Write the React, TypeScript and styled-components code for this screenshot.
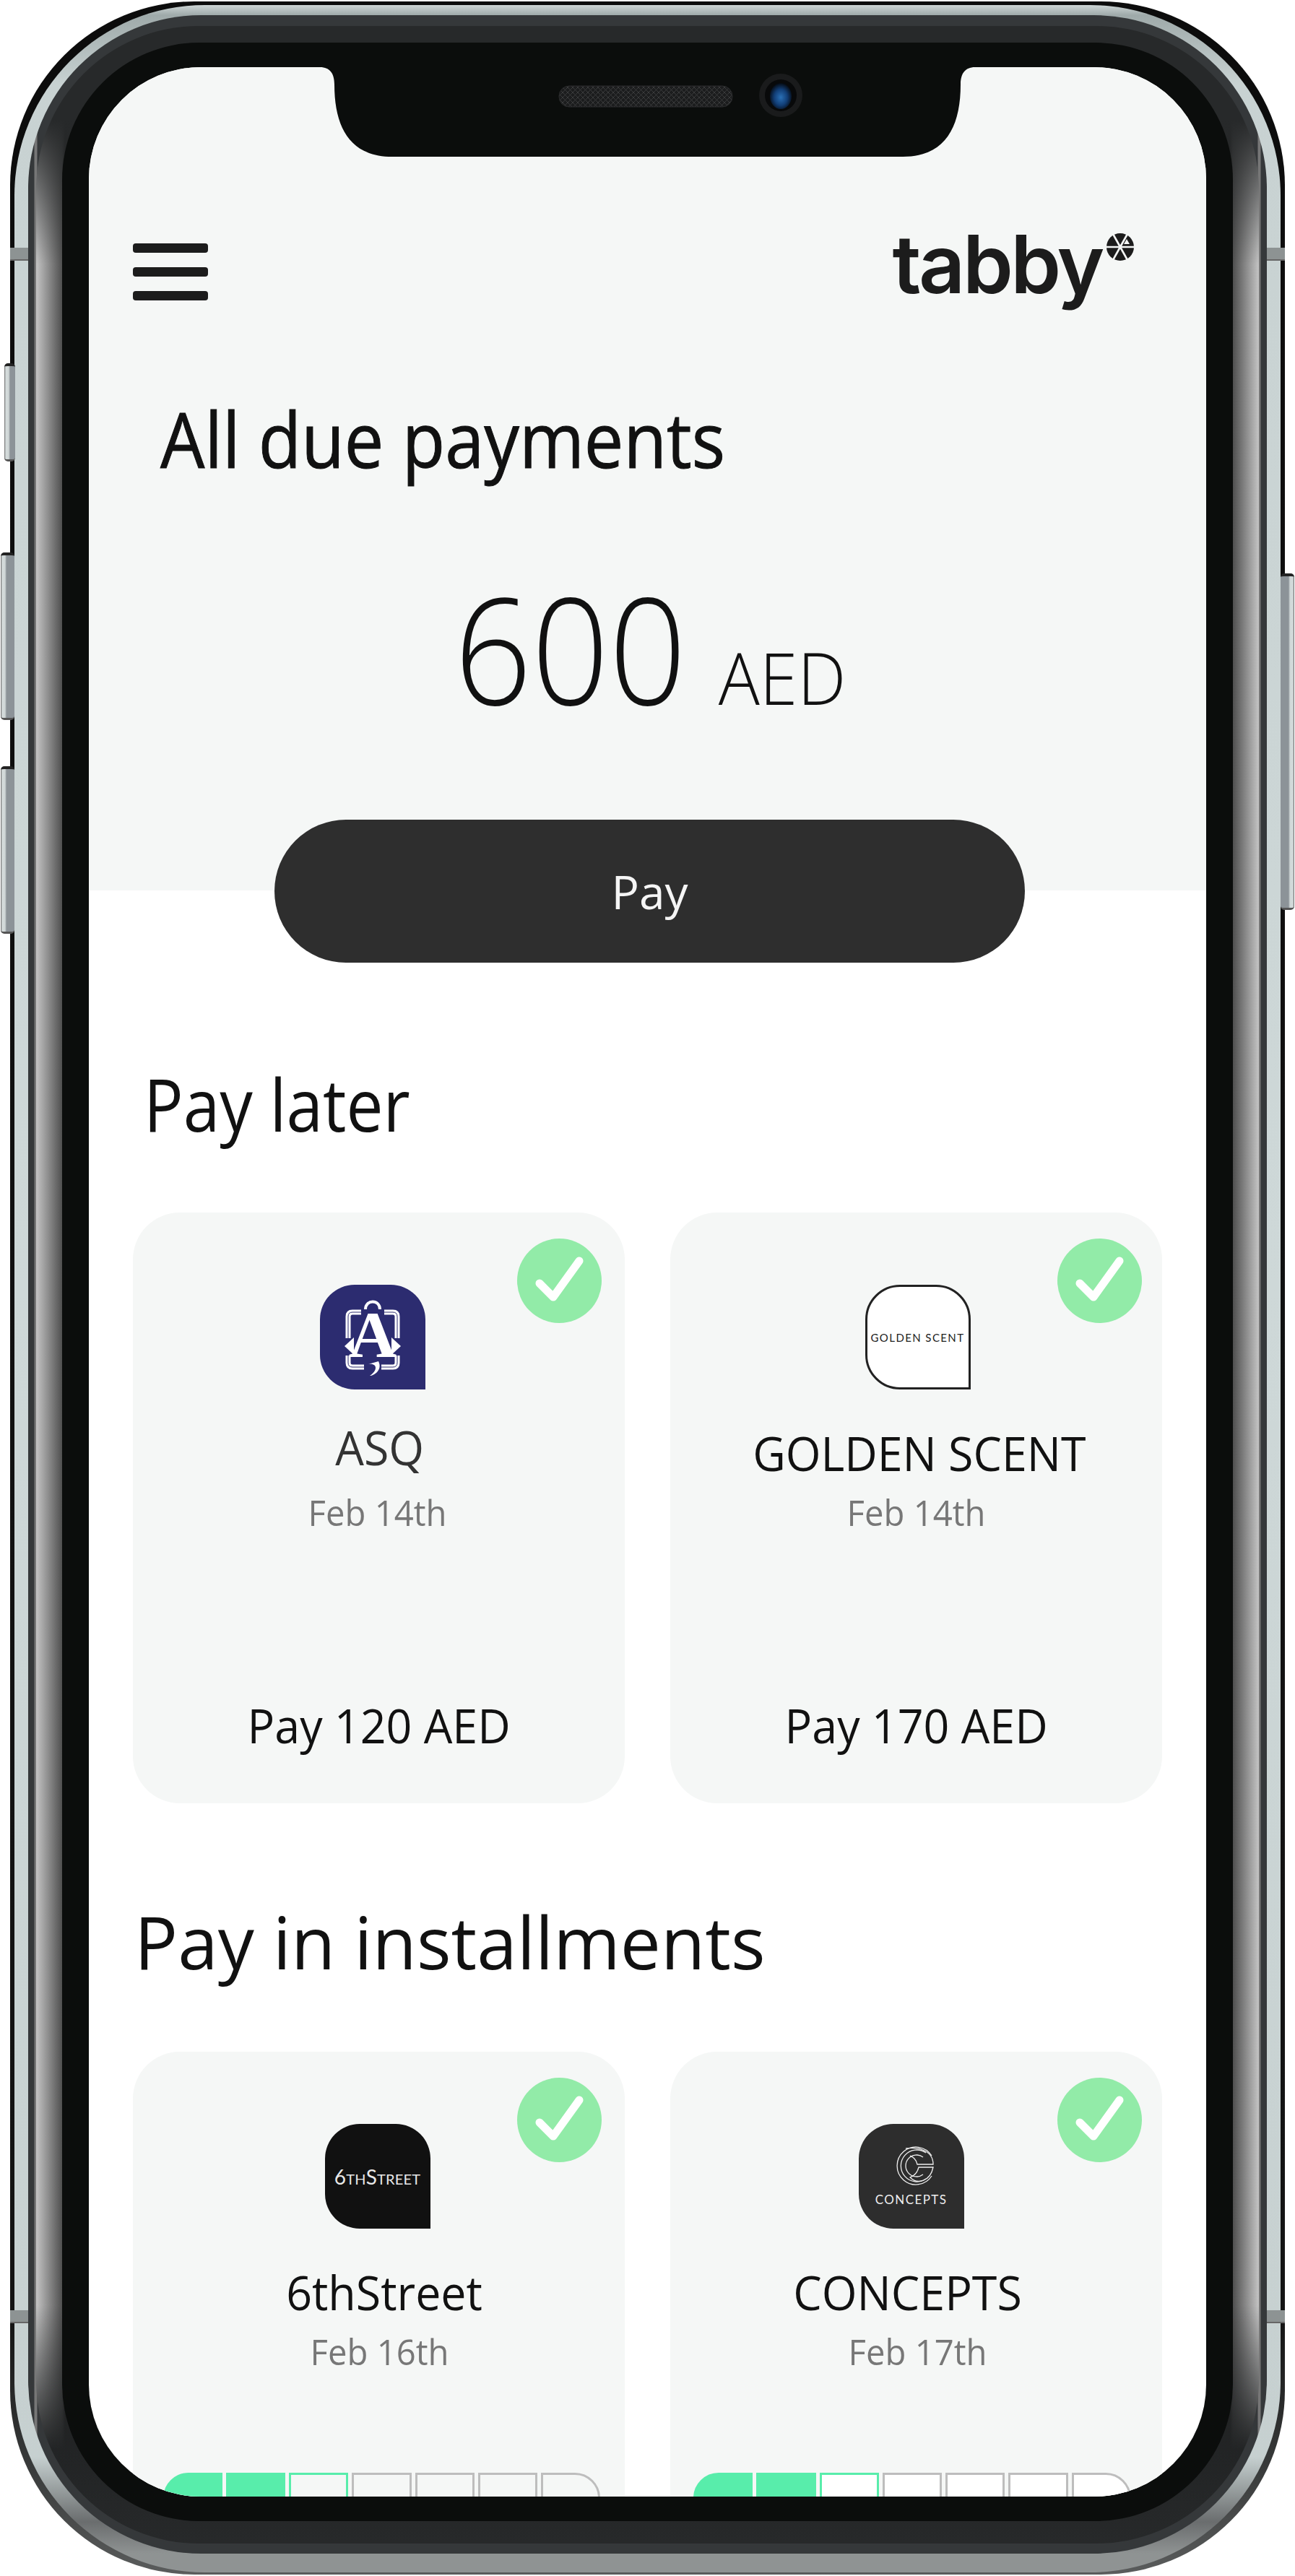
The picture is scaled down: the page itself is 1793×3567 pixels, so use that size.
import styled, { createGlobalStyle } from "styled-components";

const GlobalStyle = createGlobalStyle`
	html, body {
		margin: 0;
		padding: 0;
		background: #fff;
	}
	* {
		box-sizing: border-box;
	}
`;

const FONT = `"Open Sans", "Noto Sans", sans-serif`;

const AsqEmblem = () => (
	<svg width="80" height="110" viewBox="0 0 80 110" fill="none">
		<path d="M30 16 C30 2 50 2 50 16" stroke="#fff" strokeWidth="4" />
		<path d="M24 20 H12 Q6 20 6 26 V56 M56 20 H68 Q74 20 74 26 V56" stroke="#fff" strokeWidth="7" />
		<path d="M24 20 H12 Q6 20 6 26 V56 M56 20 H68 Q74 20 74 26 V56" stroke="#2c2c70" strokeWidth="1" />
		<path d="M6 80 V90 Q6 96 12 96 H28 M74 80 V90 Q74 96 68 96 H52" stroke="#fff" strokeWidth="7" />
		<path d="M6 80 V90 Q6 96 12 96 H28 M74 80 V90 Q74 96 68 96 H52" stroke="#2c2c70" strokeWidth="1" />
		<polygon points="1,67 14,55 14,79" fill="#fff" />
		<polygon points="79,67 66,55 66,79" fill="#fff" />
		<text x="40" y="82" textAnchor="middle" fontFamily="'Liberation Serif', serif" fontWeight="700" fontSize="92" fill="#fff">
			A
		</text>
		<path d="M34 92 C46 90 48 100 36 108 C42 108 54 100 48 88 Z" fill="#fff" />
	</svg>
);

const ConceptsMark = () => (
	<svg width="64" height="56" viewBox="0 0 64 56" fill="none" stroke="#eee" strokeWidth="1.3">
		<path d="M60 14 A26 26 0 1 0 60 42" />
		<path d="M52 10 A22 22 0 1 0 52 46" />
		<path d="M48 16 A15 15 0 1 0 48 40" />
		<path d="M24 4 C36 2 62 4 62 26 H40 C38 18 34 16 30 14" />
		<path d="M62 30 H42 C40 38 36 42 30 44 C40 54 58 50 62 30 Z" />
	</svg>
);

const TabbyWheel = () => (
	<svg width="38" height="38" viewBox="0 0 38 38">
		<circle cx="19" cy="19" r="19" fill="#1c1c1c" />
		<g stroke="#f5f7f6" strokeWidth="2.6">
			<line x1="19" y1="19" x2="9" y2="1" />
			<line x1="19" y1="19" x2="29" y2="1" />
			<line x1="0" y1="19" x2="38" y2="19" />
			<line x1="19" y1="19" x2="9" y2="37" />
			<line x1="19" y1="19" x2="29" y2="37" />
		</g>
		<polygon points="28,8 32,15 24,15" fill="#f5f7f6" />
	</svg>
);

const NotchShape = () => (
	<NotchSvg width="907" height="124" viewBox="0 0 907 124">
		<defs>
			<pattern id="mesh" width="7" height="7" patternUnits="userSpaceOnUse">
				<rect width="7" height="7" fill="#1c1d1e" />
				<path d="M0 0 L7 7 M7 0 L0 7" stroke="#3a3b3c" strokeWidth="1" />
			</pattern>
			<radialGradient id="lens" cx="50%" cy="55%" r="55%">
				<stop offset="0%" stopColor="#2a6fb5" />
				<stop offset="55%" stopColor="#123f78" />
				<stop offset="100%" stopColor="#050a12" />
			</radialGradient>
		</defs>
		<path d="M0 0 C14 0 20 9 20 24 C20 84 42 124 100 124 L807 124 C865 124 887 84 887 24 C887 9 893 0 907 0 Z" fill="#0b0d0c" />
		<rect x="331" y="26" width="240" height="29" rx="14" fill="url(#mesh)" stroke="#2a2b2c" />
		<circle cx="638" cy="39" r="30" fill="#1a1b1c" />
		<circle cx="638" cy="39" r="22" fill="#08090a" />
		<ellipse cx="638" cy="40" rx="15" ry="18" fill="url(#lens)" />
	</NotchSvg>
);

interface MerchantCardProps {
	name: string;
	date: string;
	logo: React.ReactNode;
	logoBg: string;
	logoBorder?: boolean;
	logoShift: number;
	nameTone?: string;
	nameRaise?: number;
	nameShift?: number;
	dateShift?: number;
	payLabel?: string;
	segmentBg?: string;
	barLeft?: number;
	barRight?: number;
	badgeRight?: number;
}

const SEGMENTS = ["done", "done", "current", "todo", "todo", "todo", "todo"];

const MerchantCard = ({
	name,
	date,
	logo,
	logoBg,
	logoBorder,
	logoShift,
	nameTone = "#111",
	nameRaise = 0,
	nameShift = 0,
	dateShift = 0,
	payLabel,
	segmentBg,
	barLeft = 42,
	barRight = 34,
	badgeRight = 32,
}: MerchantCardProps) => (
	<Card>
		<Badge $right={badgeRight}>
			<svg width="117" height="117" viewBox="0 0 117 117" fill="none">
				<path d="M31 62 L50 81 L86 31" stroke="#fff" strokeWidth="11" strokeLinecap="round" strokeLinejoin="round" />
			</svg>
		</Badge>
		<MerchantLogo $bg={logoBg} $border={logoBorder} $shift={logoShift}>
			{logo}
		</MerchantLogo>
		<MerchantName $tone={nameTone} $raise={nameRaise} $shift={nameShift}>
			{name}
		</MerchantName>
		<DueDate $shift={dateShift} $raise={nameRaise}>
			{date}
		</DueDate>
		{payLabel ? (
			<PayLabel>{payLabel}</PayLabel>
		) : (
			<Progress $left={barLeft} $right={barRight}>
				{SEGMENTS.map((state, i) => (
					<Segment key={i} $state={state} $bg={segmentBg} />
				))}
			</Progress>
		)}
	</Card>
);

const App = () => {
	return (
		<>
			<GlobalStyle />
			<Page>
				<SideButton $side="left" $offset={6} $top={503} $height={136} $width={15} />
				<SideButton $side="left" $offset={1} $top={765} $height={232} $width={19} />
				<SideButton $side="left" $offset={1} $top={1061} $height={232} $width={19} />
				<SideButton $side="right" $offset={1} $top={794} $height={466} $width={19} />
				<AntennaBand $side="left" $top={343} />
				<AntennaBand $side="right" $top={343} />
				<AntennaBand $side="left" $top={3199} />
				<AntennaBand $side="right" $top={3199} />
				<Shell>
					<MetalBand>
						<DarkRing>
							<Bezel>
								<BlackGlass>
									<Screen>
										<NotchShape />
										<Hero>
											<TopBar>
												<Burger>
													<BurgerLine />
													<BurgerLine />
													<BurgerLine />
												</Burger>
												<TabbyLogo>
													<TabbyWord>tabby</TabbyWord>
													<TabbyWheel />
												</TabbyLogo>
											</TopBar>
											<HeroTitle>All due payments</HeroTitle>
											<Amount>
												<AmountValue>600</AmountValue>
												<AmountCurrency>AED</AmountCurrency>
											</Amount>
										</Hero>
										<PayButton>
											<PayText>Pay</PayText>
										</PayButton>
										<SectionTitle $pad={76} $top={130} $sx={0.91}>
											Pay later
										</SectionTitle>
										<CardGrid $top={86}>
											<MerchantCard
												name="ASQ"
												date="Feb 14th"
												logoBg="#2c2c70"
												logoShift={-18}
												nameTone="#333"
												nameRaise={8}
												nameShift={3}
												dateShift={-4}
												logo={<AsqEmblem />}
												payLabel="Pay 120 AED"
											/>
											<MerchantCard
												name="GOLDEN SCENT"
												date="Feb 14th"
												logoBg="#fff"
												logoBorder
												logoShift={4}
												nameShift={9}
												badgeRight={28}
												logo={<GoldenText>GOLDEN SCENT</GoldenText>}
												payLabel="Pay 170 AED"
											/>
										</CardGrid>
										<SectionTitle $pad={63} $top={126} $sx={1}>
											Pay in installments
										</SectionTitle>
										<CardGrid $top={88}>
											<MerchantCard
												name="6thStreet"
												date="Feb 16th"
												logoBg="#111"
												logoShift={-4}
												nameShift={16}
												dateShift={2}
												segmentBg="#f5f7f6"
												logo={<StreetText>6thStreet</StreetText>}
											/>
											<MerchantCard
												name="CONCEPTS"
												date="Feb 17th"
												logoBg="#2d2d2d"
												logoShift={-14}
												nameShift={-24}
												dateShift={4}
												segmentBg="#fff"
												barLeft={32}
												barRight={43}
												badgeRight={28}
												logo={
													<ConceptsStack>
														<ConceptsMark />
														<ConceptsText>CONCEPTS</ConceptsText>
													</ConceptsStack>
												}
											/>
										</CardGrid>
									</Screen>
								</BlackGlass>
							</Bezel>
						</DarkRing>
					</MetalBand>
				</Shell>
			</Page>
		</>
	);
};

export default App;

const Page = styled.div`
	position: relative;
	width: 1793px;
	height: 3567px;
	padding: 2px 14px 2px 14px;
	font-family: ${FONT};
	background: #fff;
	overflow: hidden;
`;

const SideButton = styled.div<{ $side: string; $offset: number; $top: number; $height: number; $width: number }>`
	position: absolute;
	top: ${(p) => p.$top}px;
	${(p) => p.$side}: ${(p) => p.$offset}px;
	width: ${(p) => p.$width}px;
	height: ${(p) => p.$height}px;
	z-index: 2;
	border-radius: 5px;
	border-top: 4px solid #222;
	border-bottom: 3px solid #555;
	background: linear-gradient(
		${(p) => (p.$side === "left" ? "to right" : "to left")},
		#666 0,
		#d6dddd 2px,
		#cfd6d6 6px,
		#8c9398 8px,
		#8c9398 100%
	);
`;

const AntennaBand = styled.div<{ $side: string; $top: number }>`
	position: absolute;
	top: ${(p) => p.$top}px;
	${(p) => p.$side}: 14px;
	width: 25px;
	height: 18px;
	z-index: 2;
	background: #8d9393;
	border-bottom: 2px solid #666;
`;

const Shell = styled.div`
	height: 3563px;
	padding: 5px 6px 3px 6px;
	border-radius: 255px;
	background: linear-gradient(to bottom, #0c0c0c 0, #141414 90%, #3a3c3c 96%, #5a5c5c 100%);
`;

const MetalBand = styled.div`
	height: 100%;
	padding: 14px 19px 26px 19px;
	border-radius: 264px;
	background: linear-gradient(
		to bottom,
		#cdd5d5 0,
		#9faaaa 14px,
		#c8d2d2 110px,
		#ced8d8 50%,
		#c6d0d0 calc(100% - 160px),
		#6a6d6e calc(100% - 70px),
		#8f9393 calc(100% - 26px),
		#8f9393 100%
	);
`;

const DarkRing = styled.div`
	height: 100%;
	padding: 15px 11px 14px 11px;
	border-radius: 240px;
	background: linear-gradient(to right, #35383a 0, #35383a 8px, #777 9px, #777 12px, #35383a 13px, #35383a calc(100% - 13px), #777 calc(100% - 12px), #777 calc(100% - 9px), #35383a calc(100% - 8px), #35383a 100%);
`;

const Bezel = styled.div`
	height: 100%;
	padding: 23px 36px 31px 36px;
	border-radius: 225px;
	background: linear-gradient(to bottom, #27292a 0, #27292a 130px, transparent 330px, transparent calc(100% - 330px), #222425 calc(100% - 130px), #27292a 100%),
		linear-gradient(to right, #c4c4c4 0, #4f4f4f 36px, #222 40px, #222 calc(100% - 40px), #4f4f4f calc(100% - 36px), #c4c4c4 100%);
`;

const BlackGlass = styled.div`
	height: 100%;
	padding: 34px 37px 34px 37px;
	border-radius: 190px;
	background: #0b0d0c;
`;

const Screen = styled.div`
	position: relative;
	height: 100%;
	border-radius: 155px;
	overflow: hidden;
	background: #fff;
`;

const NotchSvg = styled.svg`
	position: absolute;
	top: 0;
	left: 320px;
	z-index: 3;
`;

const Hero = styled.div`
	height: 1140px;
	padding: 230px 0 0 61px;
	background: #f5f7f6;
`;

const TopBar = styled.div`
	display: flex;
	align-items: flex-start;
	justify-content: space-between;
	padding-right: 100px;
	height: 115px;
`;

const Burger = styled.div`
	display: flex;
	flex-direction: column;
	gap: 20px;
	padding-top: 14px;
`;

const BurgerLine = styled.div`
	width: 104px;
	height: 13px;
	border-radius: 4px;
	background: #1c1c1c;
`;

const TabbyLogo = styled.div`
	display: flex;
	align-items: flex-start;
	gap: 6px;
`;

const TabbyWord = styled.div`
	margin-top: -14px;
	font-family: Inter, "Liberation Sans", sans-serif;
	font-size: 112px;
	font-weight: 600;
	line-height: 112px;
	letter-spacing: -3.5px;
	color: #1c1c1c;
`;

const HeroTitle = styled.h1`
	margin: 104px 0 0 38px;
	font-size: 106px;
	font-weight: 500;
	line-height: 130px;
	color: #111;
	-webkit-text-stroke: 1px #111;
	transform: scaleX(0.917);
	transform-origin: left center;
`;

const Amount = styled.div`
	display: flex;
	align-items: baseline;
	justify-content: center;
	gap: 26px;
	margin: 110px 0 0 -63px;
`;

const AmountValue = styled.span`
	font-size: 204px;
	font-weight: 300;
	line-height: 230px;
	color: #111;
	transform: scaleX(0.92);
`;

const AmountCurrency = styled.span`
	font-size: 100px;
	font-weight: 300;
	line-height: 120px;
	color: #111;
	transform: scaleX(0.95);
`;

const PayButton = styled.div`
	position: relative;
	display: flex;
	align-items: center;
	justify-content: center;
	width: 1039px;
	height: 198px;
	margin: -98px 0 0 257px;
	border-radius: 99px;
	background: #2e2e2e;
`;

const PayText = styled.span`
	font-size: 64px;
	color: #f5f5f5;
`;

const SectionTitle = styled.h2<{ $pad: number; $top: number; $sx: number }>`
	margin: ${(p) => p.$top}px 0 0 ${(p) => p.$pad}px;
	font-size: 100px;
	font-weight: 400;
	line-height: 130px;
	color: #111;
	transform: scaleX(${(p) => p.$sx});
	transform-origin: left center;
`;

const CardGrid = styled.div<{ $top: number }>`
	display: grid;
	grid-template-columns: 681px 681px;
	gap: 63px;
	margin-top: ${(p) => p.$top}px;
	padding-left: 61px;
`;

const Card = styled.div`
	position: relative;
	display: flex;
	flex-direction: column;
	align-items: center;
	height: 818px;
	padding-top: 100px;
	border-radius: 65px;
	background: #f5f7f6;
`;

const Badge = styled.div<{ $right: number }>`
	position: absolute;
	top: 36px;
	right: ${(p) => p.$right}px;
	width: 117px;
	height: 117px;
	border-radius: 50%;
	background: #92eba8;
`;

const MerchantLogo = styled.div<{ $bg: string; $border?: boolean; $shift: number }>`
	display: flex;
	align-items: center;
	justify-content: center;
	width: 146px;
	height: 145px;
	flex-shrink: 0;
	margin-left: ${(p) => p.$shift}px;
	border-radius: 48px 48px 0 48px;
	background: ${(p) => p.$bg};
	${(p) => p.$border && "border: 3px solid #222;"}
`;

const GoldenText = styled.div`
	font-family: Lato, sans-serif;
	font-size: 15px;
	letter-spacing: 1.4px;
	white-space: nowrap;
	color: #222;
`;

const StreetText = styled.div`
	font-family: Lato, sans-serif;
	font-size: 28px;
	font-weight: 400;
	font-variant: small-caps;
	letter-spacing: 0.2px;
	color: #e8e8e8;
`;

const ConceptsStack = styled.div`
	display: flex;
	flex-direction: column;
	align-items: center;
	gap: 8px;
`;

const ConceptsText = styled.div`
	font-family: Lato, sans-serif;
	font-size: 17px;
	letter-spacing: 1.4px;
	color: #eee;
`;

const MerchantName = styled.div<{ $tone: string; $raise: number; $shift: number }>`
	margin-top: ${(p) => 42 - p.$raise}px;
	margin-left: ${(p) => p.$shift}px;
	font-size: 66px;
	line-height: 90px;
	white-space: nowrap;
	color: ${(p) => p.$tone};
	transform: scaleX(0.95);
`;

const DueDate = styled.div<{ $shift: number; $raise: number }>`
	margin-top: ${(p) => p.$raise}px;
	margin-left: ${(p) => p.$shift}px;
	font-size: 50px;
	line-height: 76px;
	color: #777;
	transform: scaleX(0.945);
`;

const PayLabel = styled.div`
	margin-top: auto;
	padding-bottom: 64px;
	font-size: 66px;
	line-height: 90px;
	color: #111;
	transform: scaleX(0.95);
`;

const Progress = styled.div<{ $left: number; $right: number }>`
	position: absolute;
	top: 583px;
	left: ${(p) => p.$left}px;
	right: ${(p) => p.$right}px;
	display: grid;
	grid-template-columns: repeat(7, 1fr);
	gap: 5px;
	height: 70px;
`;

const Segment = styled.div<{ $state: string; $bg?: string }>`
	border: 3px solid ${(p) => (p.$state === "todo" ? "#bdbdbd" : "#58edab")};
	background: ${(p) => (p.$state === "done" ? "#58edab" : p.$bg)};
	&:first-child {
		border-top-left-radius: 35px;
	}
	&:last-child {
		border-top-right-radius: 35px;
	}
`;
